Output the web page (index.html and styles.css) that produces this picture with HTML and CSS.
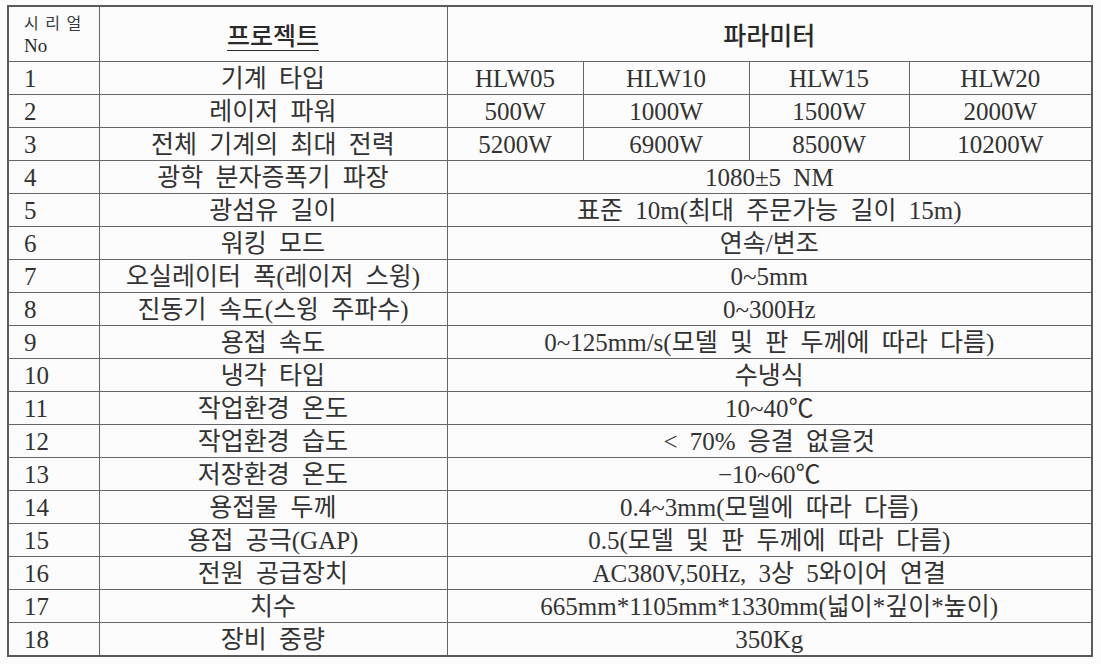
FILE: index.html
```html
<!DOCTYPE html>
<html lang="ko">
<head>
<meta charset="utf-8">
<title>사양표</title>
<link rel="stylesheet" href="styles.css">
</head>
<body>
<table class="spec">
  <colgroup>
    <col class="c-no">
    <col class="c-item">
    <col class="c-a">
    <col class="c-b">
    <col class="c-c">
    <col class="c-d">
  </colgroup>
  <thead>
    <tr class="head">
      <th class="no-head"><span class="serial">시 리 얼</span><span class="no-label">No</span></th>
      <th class="item-head"><span class="ul">프로젝트</span></th>
      <th colspan="4" class="param-head">파라미터</th>
    </tr>
  </thead>
  <tbody>
    <tr><td class="num">1</td><td>기계 타입</td><td>HLW05</td><td>HLW10</td><td>HLW15</td><td>HLW20</td></tr>
    <tr><td class="num">2</td><td>레이저 파워</td><td>500W</td><td>1000W</td><td>1500W</td><td>2000W</td></tr>
    <tr><td class="num">3</td><td>전체 기계의 최대 전력</td><td>5200W</td><td>6900W</td><td>8500W</td><td>10200W</td></tr>
    <tr><td class="num">4</td><td>광학 분자증폭기 파장</td><td colspan="4">1080±5 NM</td></tr>
    <tr><td class="num">5</td><td>광섬유 길이</td><td colspan="4">표준 10m(최대 주문가능 길이 15m)</td></tr>
    <tr><td class="num">6</td><td>워킹 모드</td><td colspan="4">연속/변조</td></tr>
    <tr><td class="num">7</td><td>오실레이터 폭(레이저 스윙)</td><td colspan="4">0~5mm</td></tr>
    <tr><td class="num">8</td><td>진동기 속도(스윙 주파수)</td><td colspan="4">0~300Hz</td></tr>
    <tr><td class="num">9</td><td>용접 속도</td><td colspan="4">0~125mm/s(모델 및 판 두께에 따라 다름)</td></tr>
    <tr><td class="num">10</td><td>냉각 타입</td><td colspan="4">수냉식</td></tr>
    <tr><td class="num">11</td><td>작업환경 온도</td><td colspan="4">10~40℃</td></tr>
    <tr><td class="num">12</td><td>작업환경 습도</td><td colspan="4">&lt; 70% 응결 없을것</td></tr>
    <tr><td class="num">13</td><td>저장환경 온도</td><td colspan="4">−10~60℃</td></tr>
    <tr><td class="num">14</td><td>용접물 두께</td><td colspan="4">0.4~3mm(모델에 따라 다름)</td></tr>
    <tr><td class="num">15</td><td>용접 공극(GAP)</td><td colspan="4">0.5(모델 및 판 두께에 따라 다름)</td></tr>
    <tr><td class="num">16</td><td>전원 공급장치</td><td colspan="4">AC380V,50Hz, 3상 5와이어 연결</td></tr>
    <tr><td class="num">17</td><td>치수</td><td colspan="4">665mm*1105mm*1330mm(넓이*깊이*높이)</td></tr>
    <tr><td class="num">18</td><td>장비 중량</td><td colspan="4">350Kg</td></tr>
  </tbody>
</table>
</body>
</html>
```

FILE: styles.css
```css
html, body {
  margin: 0;
  padding: 0;
  background: #fcfcfc;
}

body {
  padding: 5px 0 0 7px;
  font-family: "Liberation Serif", "Noto Sans CJK KR", serif;
  color: #333;
}

.spec {
  border-collapse: collapse;
  table-layout: fixed;
  width: 1084px;
  border: 2px solid #5a5a5a;
  font-size: 25px;
  word-spacing: 6px;
}

.c-no { width: 91px; }
.c-item { width: 348px; }
.c-a { width: 136px; }
.c-b { width: 166px; }
.c-c { width: 160px; }
.c-d { width: 183px; }

.spec th,
.spec td {
  border: 1px solid #666;
  padding: 0;
  text-align: center;
  vertical-align: middle;
  white-space: nowrap;
  font-weight: 400;
  line-height: 1;
}

.spec td {
  height: 32px;
}

.head th {
  height: 54px;
  font-family: "Noto Sans CJK KR", sans-serif;
  font-weight: 500;
  font-size: 25px;
  color: #2a2a2a;
}

.spec .no-head {
  text-align: left;
  padding-left: 15px;
  font-weight: 400;
}

.serial {
  display: block;
  font-size: 16px;
  letter-spacing: 1px;
  word-spacing: 0;
  line-height: 24px;
  color: #3a3a3a;
}

.no-label {
  display: block;
  font-family: "Liberation Serif", serif;
  font-size: 19px;
  line-height: 24px;
}

.ul {
  text-decoration: underline;
  text-underline-offset: 5px;
  text-decoration-thickness: 1px;
}

.spec td.num {
  text-align: left;
  padding-left: 15px;
}
```
